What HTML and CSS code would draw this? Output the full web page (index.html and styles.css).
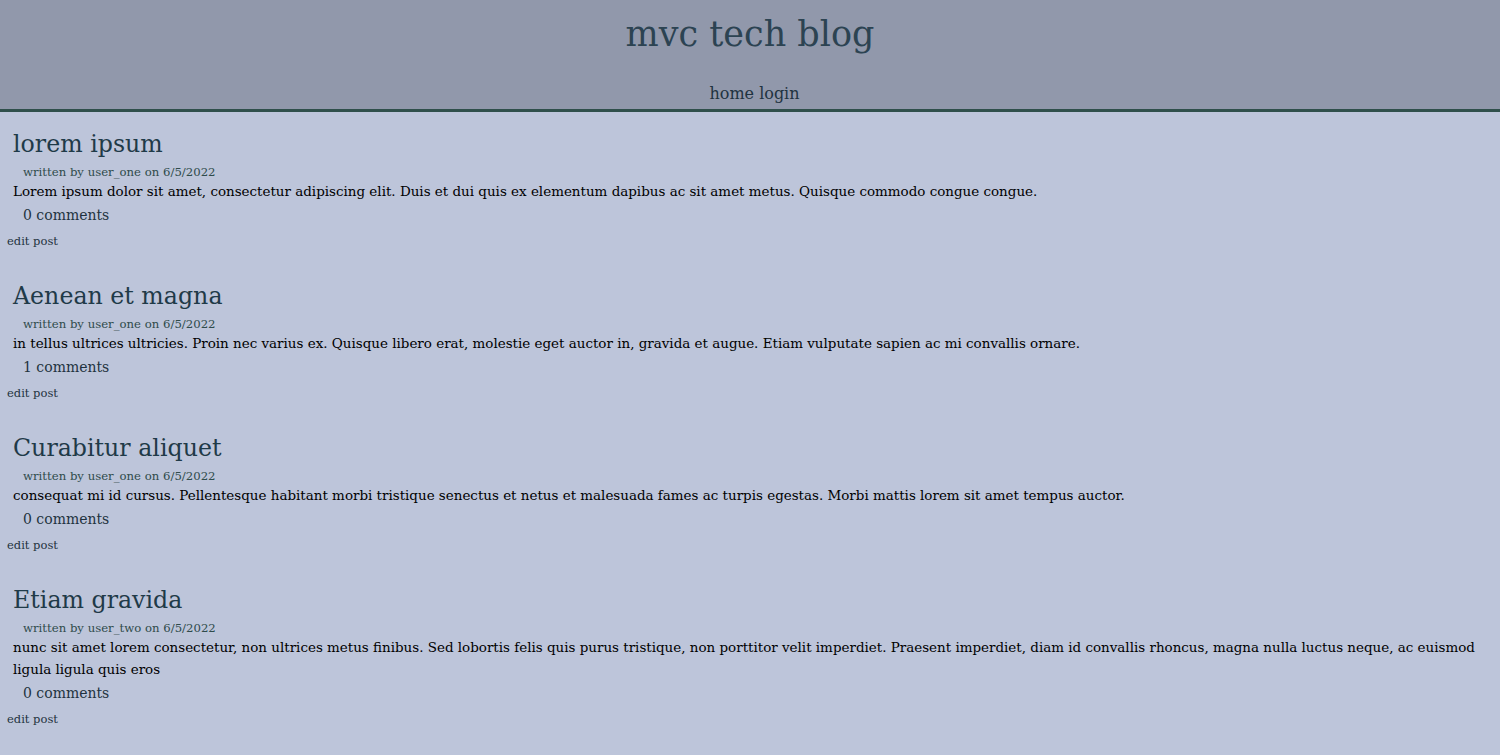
FILE: index.html
```html
<!DOCTYPE html>
<html lang="en">
<head>
<meta charset="utf-8">
<title>mvc tech blog</title>
<link rel="stylesheet" href="styles.css">
</head>
<body>
<header class="site-header">
  <h1 class="site-title">mvc tech blog</h1>
  <nav class="site-nav"><a href="#">home</a> <a href="#">login</a></nav>
</header>
<main class="posts">
  <section class="post-wrap">
    <article class="post">
      <h2 class="post-title">lorem ipsum</h2>
      <p class="post-meta">written by user_one on 6/5/2022</p>
      <p class="post-body">Lorem ipsum dolor sit amet, consectetur adipiscing elit. Duis et dui quis ex elementum dapibus ac sit amet metus. Quisque commodo congue congue.</p>
      <p class="post-comments">0 comments</p>
    </article>
    <a class="edit-link" href="#">edit post</a>
  </section>
  <section class="post-wrap">
    <article class="post">
      <h2 class="post-title">Aenean et magna</h2>
      <p class="post-meta">written by user_one on 6/5/2022</p>
      <p class="post-body">in tellus ultrices ultricies. Proin nec varius ex. Quisque libero erat, molestie eget auctor in, gravida et augue. Etiam vulputate sapien ac mi convallis ornare.</p>
      <p class="post-comments">1 comments</p>
    </article>
    <a class="edit-link" href="#">edit post</a>
  </section>
  <section class="post-wrap">
    <article class="post">
      <h2 class="post-title">Curabitur aliquet</h2>
      <p class="post-meta">written by user_one on 6/5/2022</p>
      <p class="post-body">consequat mi id cursus. Pellentesque habitant morbi tristique senectus et netus et malesuada fames ac turpis egestas. Morbi mattis lorem sit amet tempus auctor.</p>
      <p class="post-comments">0 comments</p>
    </article>
    <a class="edit-link" href="#">edit post</a>
  </section>
  <section class="post-wrap">
    <article class="post">
      <h2 class="post-title">Etiam gravida</h2>
      <p class="post-meta">written by user_two on 6/5/2022</p>
      <p class="post-body">nunc sit amet lorem consectetur, non ultrices metus finibus. Sed lobortis felis quis purus tristique, non porttitor velit imperdiet. Praesent imperdiet, diam id convallis rhoncus, magna nulla luctus neque, ac euismod ligula ligula quis eros</p>
      <p class="post-comments">0 comments</p>
    </article>
    <a class="edit-link" href="#">edit post</a>
  </section>
</main>
</body>
</html>
```
FILE: styles.css
```css
html, body {
  margin: 0;
  padding: 0;
}
body {
  background: #bdc5da;
  font-family: "DejaVu Serif", "Liberation Serif", serif;
  color: #000;
  min-height: 755px;
}
a {
  color: inherit;
  text-decoration: none;
}
.site-header {
  background: #9198ab;
  border-bottom: 3px solid #2f4f4b;
  text-align: center;
  height: 112px;
  box-sizing: border-box;
  display: flex;
  flex-direction: column;
  align-items: center;
}
.site-title {
  margin: 12px 0 0;
  font-size: 35px;
  font-weight: 400;
  line-height: 44px;
  color: #2c4352;
}
.site-nav {
  margin-top: 27px;
  padding-left: 9px;
  font-size: 16px;
  line-height: 22px;
  color: #1f3340;
}
.posts {
  padding: 16px 0 0 7px;
}
.post-wrap {
  margin-bottom: 30px;
}
.post {
  padding-left: 6px;
}
.post-title {
  margin: 0;
  font-size: 23.7px;
  font-weight: 400;
  line-height: 32px;
  color: #1f3a48;
}
.post-meta {
  margin: 3px 0 0 10px;
  font-size: 11.7px;
  line-height: 18px;
  color: #2f4b4b;
}
.post-body {
  margin: 0;
  font-size: 13.46px;
  line-height: 22px;
}
.post-comments {
  margin: 1px 0 0 10px;
  font-size: 14px;
  line-height: 22px;
  color: #1f3340;
}
.edit-link {
  display: block;
  margin-top: 6px;
  font-size: 11.5px;
  line-height: 18px;
  color: #1f3340;
}
```
